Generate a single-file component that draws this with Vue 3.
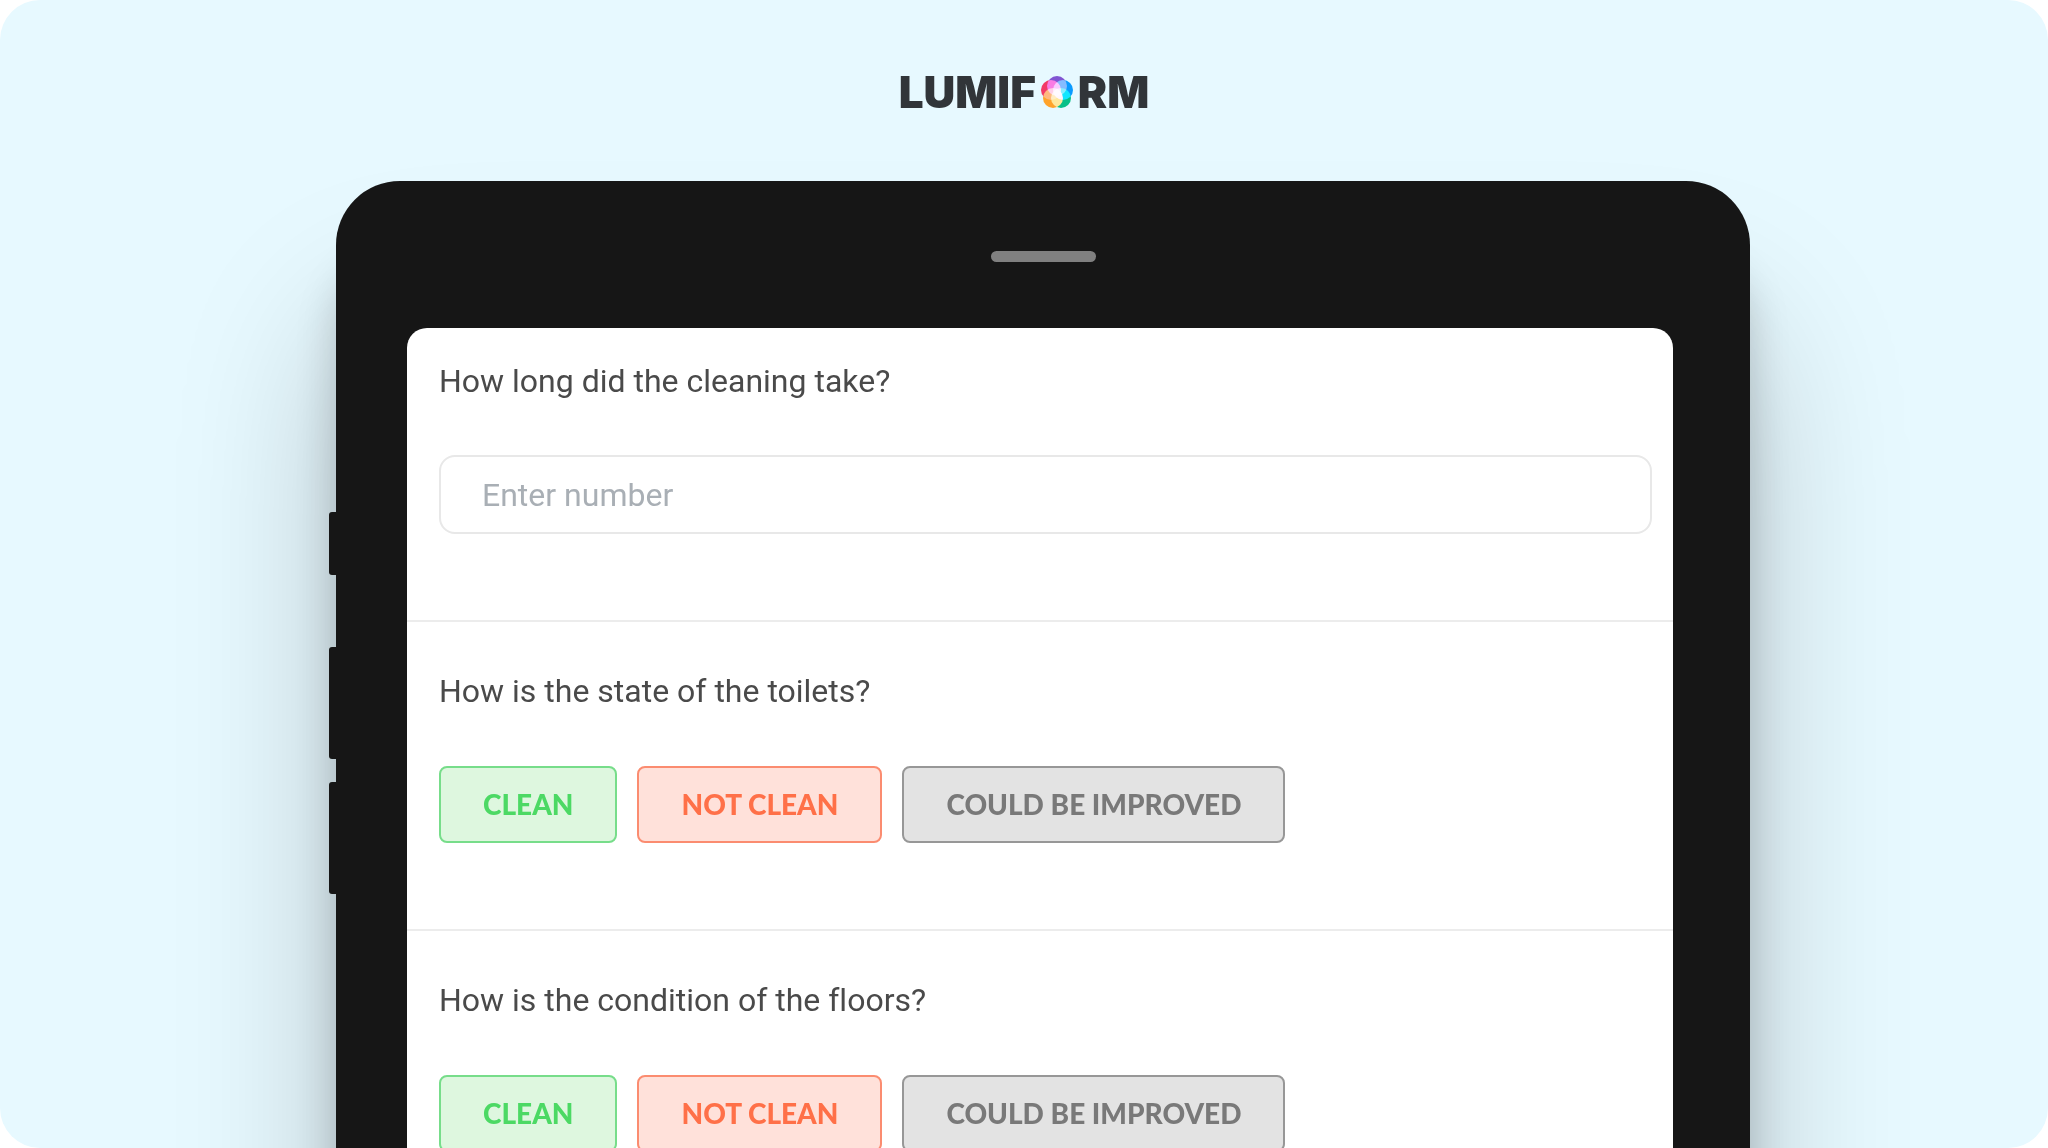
<script setup>
import { ref } from 'vue'

const duration = ref('')

const options = [
  { label: 'CLEAN', tone: 'good' },
  { label: 'NOT CLEAN', tone: 'bad' },
  { label: 'COULD BE IMPROVED', tone: 'neutral' },
]

const choices = [
  { id: 'toilets', question: 'How is the state of the toilets?' },
  { id: 'floors', question: 'How is the condition of the floors?' },
]

const petals = [
  { x: 16, y: 10, color: '#8055d2' },
  { x: 22, y: 14, color: '#0a9bff' },
  { x: 20, y: 22, color: '#08c088' },
  { x: 12, y: 22, color: '#ffa32a' },
  { x: 10, y: 14, color: '#f23a66' },
]
</script>

<template>
  <main class="stage">
    <header class="brand">
      <h1 class="wordmark">
        <span>LUMIF</span>
        <svg class="bloom" viewBox="0 0 32 32" role="img" aria-label="O">
          <g class="petals">
            <circle v-for="p in petals" :key="p.color" :cx="p.x" :cy="p.y" r="10" :fill="p.color" />
          </g>
        </svg>
        <span>RM</span>
      </h1>
    </header>

    <div class="device-row">
      <div class="device">
        <i class="side-key key-mute"></i>
        <i class="side-key key-up"></i>
        <i class="side-key key-down"></i>
        <div class="speaker"></div>

        <form class="screen" @submit.prevent>
          <section class="block first">
            <label class="question" for="duration">How long did the cleaning take?</label>
            <input
              id="duration"
              v-model="duration"
              class="field"
              type="text"
              inputmode="numeric"
              placeholder="Enter number"
            />
          </section>

          <section v-for="c in choices" :key="c.id" class="block">
            <h2 :id="c.id" class="question">{{ c.question }}</h2>
            <div class="options" role="group" :aria-labelledby="c.id">
              <button
                v-for="o in options"
                :key="o.label"
                type="button"
                class="option"
                :class="o.tone"
              >
                {{ o.label }}
              </button>
            </div>
          </section>
        </form>
      </div>
    </div>
  </main>
</template>

<style>
body {
  margin: 0;
  background: #fff;
}
</style>

<style scoped>
.stage {
  height: 100vh;
  overflow: hidden;
  border-radius: 40px;
  background: #e7f9ff;
  font-family: Roboto, 'Liberation Sans', sans-serif;
}

.brand {
  display: flex;
  justify-content: center;
  padding: 68px 0 65px;
}

.wordmark {
  display: flex;
  align-items: center;
  gap: 5px;
  height: 48px;
  margin: 0;
  color: #313539;
  font: 900 44px/48px Inter, sans-serif;
}

.bloom {
  width: 32px;
  height: 32px;
}

.petals {
  isolation: isolate;
}

.petals circle {
  mix-blend-mode: screen;
}

.device-row {
  display: grid;
  grid-template-columns: 336fr 1414fr 298fr;
}

.device {
  position: relative;
  grid-column: 2;
  box-sizing: border-box;
  padding: 70px 0;
  border-radius: 64px 64px 0 0;
  background: #161616;
  box-shadow:
    0 80px 40px rgba(0, 0, 0, 0.18),
    0 140px 160px rgba(0, 0, 0, 0.22);
}

.side-key {
  position: absolute;
  left: -7px;
  width: 9px;
  height: 112px;
  border-radius: 3px 0 0 3px;
  background: #161616;
}

.key-mute {
  top: 331px;
  height: 63px;
}

.key-up {
  top: 466px;
}

.key-down {
  top: 601px;
}

.speaker {
  width: 105px;
  height: 11px;
  margin: 0 auto 66px;
  border-radius: 6px;
  background: #808080;
}

.screen {
  margin: 0 77px 0 71px;
  overflow: hidden;
  border-radius: 20px 20px 0 0;
  background: #fff;
}

.block {
  display: flex;
  flex-direction: column;
  gap: 55px;
  padding: 49px 21px 86px 32px;
  border-bottom: 2px solid #ececec;
}

.first {
  gap: 54px;
  padding-top: 33px;
}

.question {
  margin: 0;
  color: #4a4a4a;
  font-size: 32px;
  font-weight: 400;
  font-variant-ligatures: none;
  line-height: 40px;
}

.field {
  box-sizing: border-box;
  width: 100%;
  height: 79px;
  padding: 0 41px;
  border: 2px solid #e8e8e8;
  border-radius: 16px;
  outline: none;
  background: #fff;
  color: #4a4a4a;
  font: 400 32px/40px Roboto, 'Liberation Sans', sans-serif;
}

.field::placeholder {
  color: #a9afb5;
  opacity: 1;
}

.options {
  display: flex;
  flex-wrap: wrap;
  gap: 20px;
}

.option {
  box-sizing: border-box;
  height: 77px;
  padding: 0 42px 2px;
  border: 2px solid;
  border-radius: 8px;
  font: 900 28px/40px Lato, sans-serif;
  cursor: pointer;
}

.good {
  border-color: #77dd8a;
  background: #def7df;
  color: #4cd964;
}

.bad {
  border-color: #fb8c70;
  background: #ffe1da;
  color: #ff7048;
}

.neutral {
  border-color: #979797;
  background: #e3e3e3;
  color: #797979;
}
</style>
